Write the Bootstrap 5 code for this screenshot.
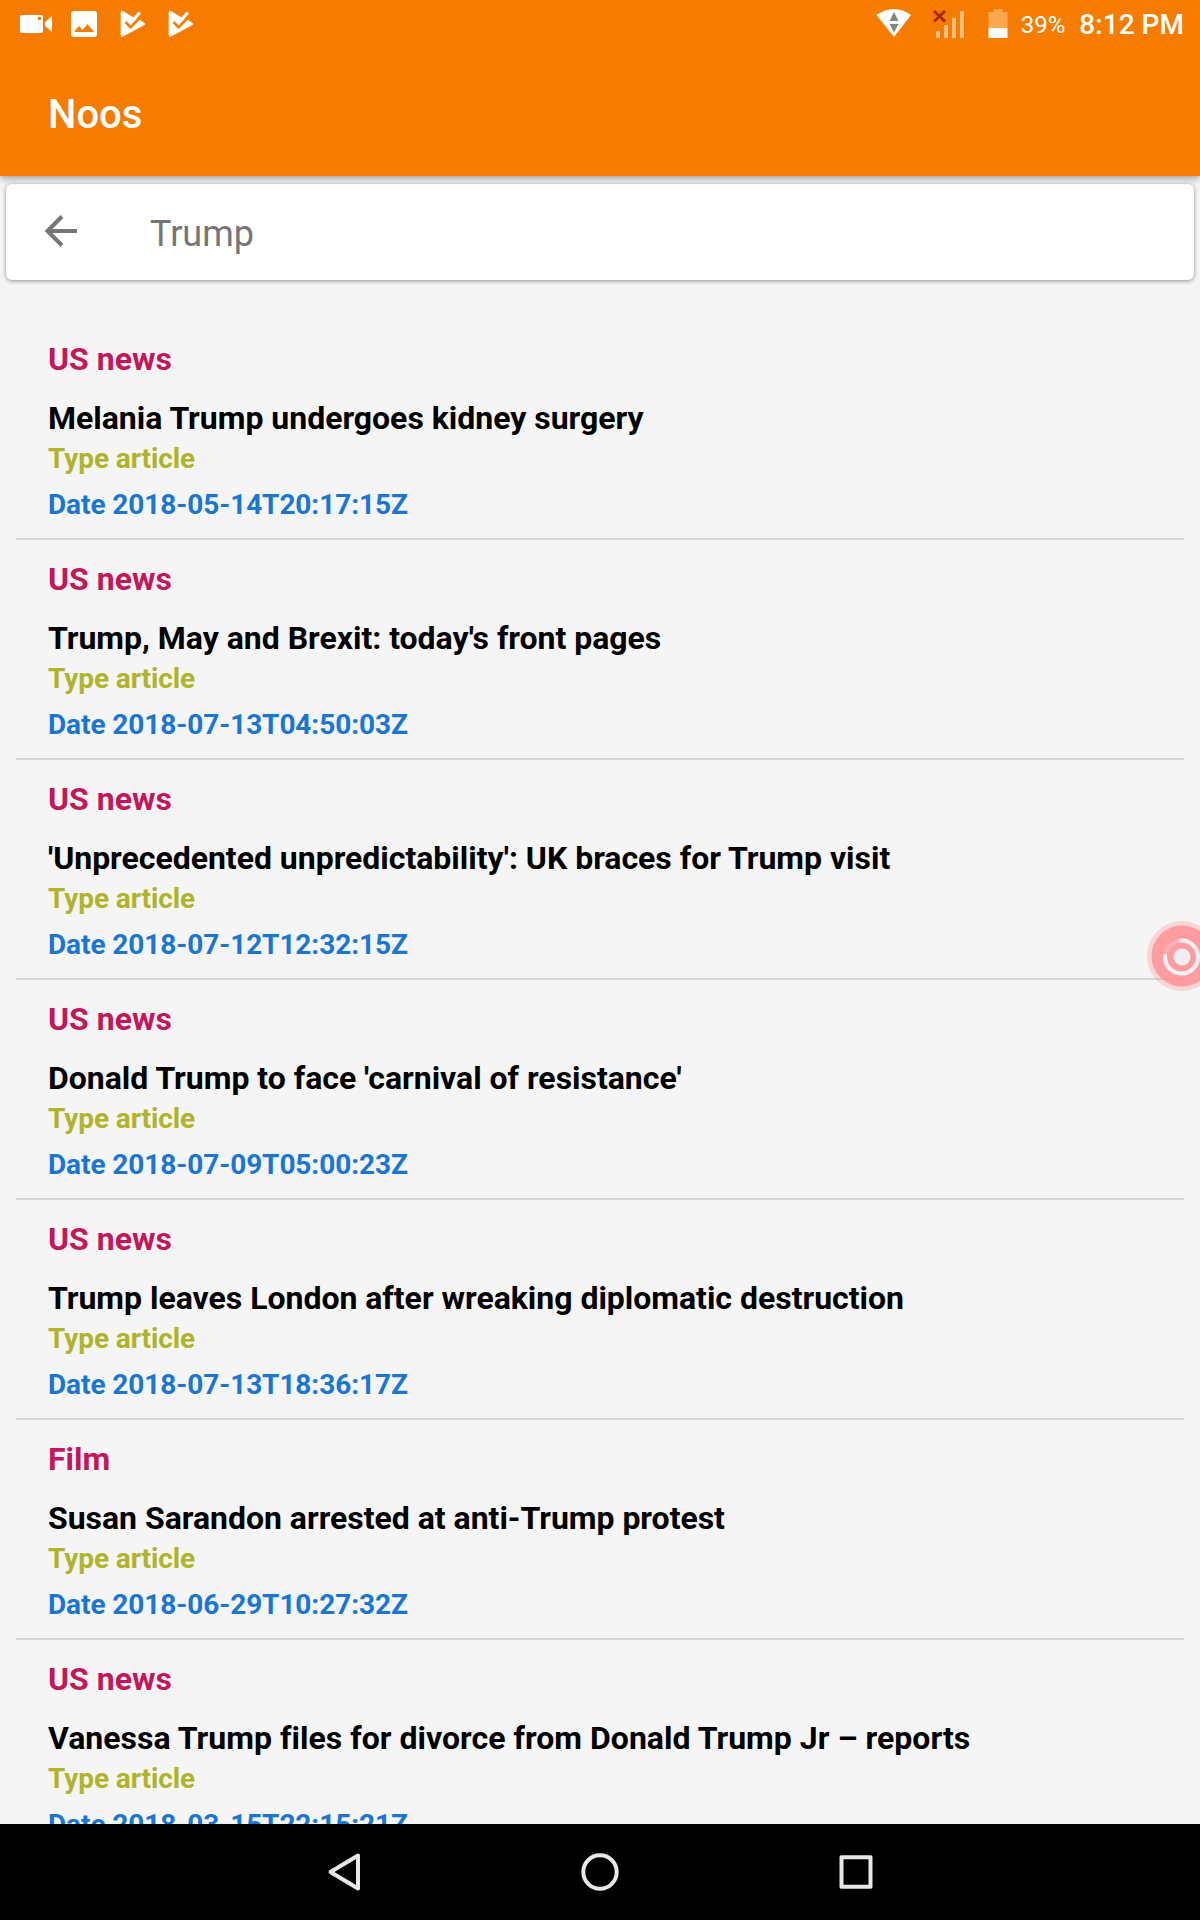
<!DOCTYPE html>
<html lang="en">
<head>
<meta charset="utf-8">
<meta name="viewport" content="width=device-width, initial-scale=1">
<title>Noos</title>
<link href="https://cdn.jsdelivr.net/npm/bootstrap@5.3.0/dist/css/bootstrap.min.css" rel="stylesheet">
<style>
  body { font-family: Roboto, sans-serif; background: #f5f5f5; }
  .screen { width: 1200px; height: 1920px; background: #f5f5f5; }
  .app-header { background: #f67c00; height: 176px; box-shadow: 0 2px 8px rgba(0,0,0,.4); z-index: 1; }
  .status-bar { height: 48px; padding: 0 16px 0 18px; }
  .status-bar svg, .nav-keys svg { display: block; flex: none; }
  .battery-text { font-size: 24px; line-height: 48px; margin: 2px 14px 0 13px; }
  .clock-text { font-size: 28px; line-height: 48px; font-weight: 500; margin-top: 2px; letter-spacing: .03px; }
  .app-title { font-size: 40px; line-height: 48px; font-weight: 500; padding: 43px 0 0 48px; }
  .search-box { margin: 8px 6px 0; height: 96px; border-radius: 6px; background: #fff; padding-left: 38px;
    box-shadow: 0 1px 4px rgba(0,0,0,.42); }
  .search-text { font-size: 36px; line-height: 44px; color: #757575; margin-left: 72px; padding-top: 3px; }
  .results { margin-top: 40px; padding: 0 16px; }
  .result { height: 220px; padding: 20px 32px 0; border-bottom: 2px solid #d6d6d6; font-weight: 700; white-space: nowrap; flex: none; }
  .section-name { font-size: 32px; line-height: 38px; color: #c2185b; margin-bottom: 21px; }
  .headline { font-size: 32px; line-height: 38px; color: #000; font-weight: 700; margin-bottom: 5px; letter-spacing: -.02px; }
  .result:last-child .headline { letter-spacing: .02px; }
  .kind { font-size: 28px; line-height: 34px; color: #afb42b; margin-bottom: 12px; letter-spacing: -.08px; }
  .stamp { font-size: 28px; line-height: 34px; color: #1976d2; letter-spacing: -.08px; }
  .nav-keys { height: 96px; background: #000; z-index: 1; }
  .bubble { right: 0; top: 920px; z-index: 2; }
</style>
</head>
<body>
<div class="screen position-relative overflow-hidden d-flex flex-column">
  <header class="app-header position-relative flex-shrink-0 text-white">
    <div class="status-bar d-flex align-items-center justify-content-between">
      <svg width="180" height="48" fill="#fff">
        <path fill-rule="evenodd" d="M4 15H23Q25 15 25 17V31Q25 33 23 33H4Q2 33 2 31V17Q2 15 4 15ZM20 17V20H23V17ZM27 22L34 16V32L27 26Z"/>
        <path fill-rule="evenodd" d="M56 11H76Q79 11 79 14V34Q79 37 76 37H56Q53 37 53 34V14Q53 11 56 11ZM56 32H76L69.500 24L64.500 30L61 26Z"/>
        <g id="storeCheck">
          <path d="M105 11L114 16.500L122 20L126.500 23Q127.500 24 126.500 25L105 36.500Q102.700 37.300 102.700 34.500V12.500Q102.700 10.300 105 11Z"/>
          <path d="M107.500 22L112.500 27L123 16.500" fill="none" stroke="#f67c00" stroke-width="2.800"/>
          <path d="M110 20.500L112.700 23L121.800 12.500" fill="none" stroke="#fff" stroke-width="3.200"/>
        </g>
        <use href="#storeCheck" x="48"/>
      </svg>
      <div class="d-flex align-items-center">
        <svg width="132" height="48">
          <path d="M.5 15Q18 3 35 15L18 37Z" fill="#fff"/>
          <path d="M13.500 21L18 12L22.500 21ZM13.500 24H22.500L18 32.500Z" fill="#858585"/>
          <path d="M60 31H64V38H60ZM68 25H72V38H68ZM76 18H80V38H76ZM84 11H88V38H84Z" fill="#ffbd7d"/>
          <path d="M58 11L69 21.500M69 11L58 21.500" stroke="#a62a13" stroke-width="3"/>
          <path d="M112.500 12H117.500V9H126.500V12H131.500V28H112.500Z" fill="#fba850"/>
          <path d="M112.500 28H131.500V38H112.500Z" fill="#fff"/>
        </svg>
        <span class="battery-text">39%</span>
        <span class="clock-text">8:12 PM</span>
      </div>
    </div>
    <div class="app-title">Noos</div>
  </header>
  <div class="search-box flex-shrink-0 d-flex align-items-center">
    <svg width="34" height="34" fill="none" stroke="#757575" stroke-width="4"><path d="M33 16H4M18 1.500L3.500 16L18 30.500"/></svg>
    <div class="search-text">Trump</div>
  </div>
  <main class="results flex-grow-1 overflow-hidden d-flex flex-column">
    <article class="result">
      <div class="section-name">US news</div><h2 class="headline">Melania Trump undergoes kidney surgery</h2>
      <div class="kind">Type article</div><div class="stamp">Date 2018-05-14T20:17:15Z</div>
    </article>
    <article class="result">
      <div class="section-name">US news</div><h2 class="headline">Trump, May and Brexit: today's front pages</h2>
      <div class="kind">Type article</div><div class="stamp">Date 2018-07-13T04:50:03Z</div>
    </article>
    <article class="result">
      <div class="section-name">US news</div><h2 class="headline">'Unprecedented unpredictability': UK braces for Trump visit</h2>
      <div class="kind">Type article</div><div class="stamp">Date 2018-07-12T12:32:15Z</div>
    </article>
    <article class="result">
      <div class="section-name">US news</div><h2 class="headline">Donald Trump to face 'carnival of resistance'</h2>
      <div class="kind">Type article</div><div class="stamp">Date 2018-07-09T05:00:23Z</div>
    </article>
    <article class="result">
      <div class="section-name">US news</div><h2 class="headline">Trump leaves London after wreaking diplomatic destruction</h2>
      <div class="kind">Type article</div><div class="stamp">Date 2018-07-13T18:36:17Z</div>
    </article>
    <article class="result">
      <div class="section-name">Film</div><h2 class="headline">Susan Sarandon arrested at anti-Trump protest</h2>
      <div class="kind">Type article</div><div class="stamp">Date 2018-06-29T10:27:32Z</div>
    </article>
    <article class="result">
      <div class="section-name">US news</div><h2 class="headline">Vanessa Trump files for divorce from Donald Trump Jr – reports</h2>
      <div class="kind">Type article</div><div class="stamp">Date 2018-03-15T22:15:21Z</div>
    </article>
  </main>
  <nav class="nav-keys flex-shrink-0 d-flex justify-content-center align-items-center">
    <svg width="600" height="96" fill="none" stroke="#e8e8e8" stroke-width="4" stroke-linejoin="round">
      <path d="M58 31.500V64.500L30.500 48Z"/>
      <circle cx="300" cy="48" r="16.700"/>
      <rect x="541.500" y="33.300" width="29" height="29.500"/>
    </svg>
  </nav>
  <svg class="bubble position-absolute" width="60" height="72">
    <circle cx="42" cy="36" r="35" fill="#ff8a90" fill-opacity=".3"/>
    <circle cx="42" cy="36" r="30.500" fill="#ff8a90" fill-opacity=".75"/>
    <circle cx="42" cy="37" r="16.500" fill="none" stroke="#fbb0b4" stroke-width="4"/>
    <path d="M41 20.500A16.500 16.500 0 1 1 25 36" fill="none" stroke="#f5f0f1" stroke-width="4" stroke-linecap="round"/>
    <circle cx="42" cy="37" r="8.500" fill="#f2eef0"/>
  </svg>
</div>
<script src="https://cdn.jsdelivr.net/npm/bootstrap@5.3.0/dist/js/bootstrap.bundle.min.js"></script>
</body>
</html>
